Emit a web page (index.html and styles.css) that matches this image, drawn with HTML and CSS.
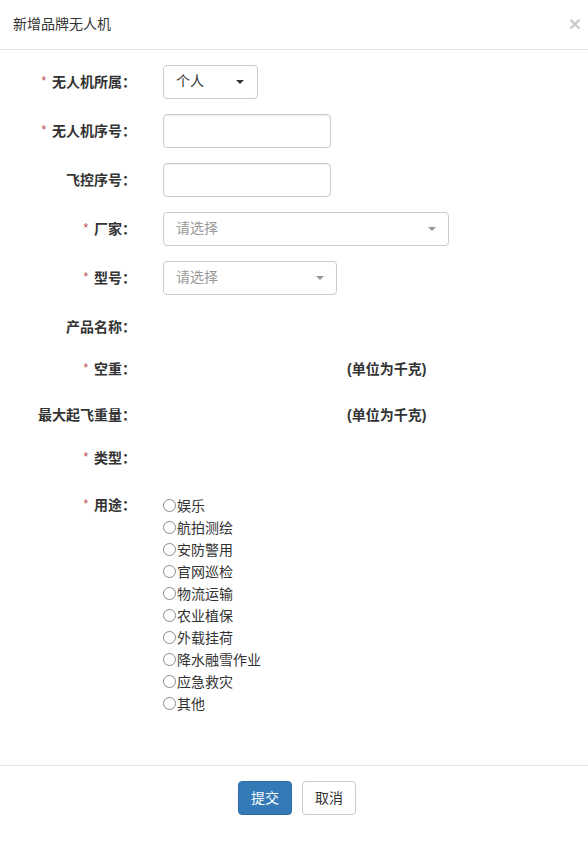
FILE: index.html
```html
<!DOCTYPE html>
<html lang="zh-CN">
<head>
    <meta charset="UTF-8">
    <meta name="viewport" content="width=device-width, initial-scale=1.0">
    <title>新增品牌无人机</title>
    <link rel="stylesheet" href="styles.css">
</head>
<body>
    <div class="modal">
        <div class="modal-header">
            <h4 class="modal-title">新增品牌无人机</h4>
            <button class="close" type="button">&times;</button>
        </div>

        <form class="modal-body">
            <div class="form-group">
                <label class="control-label"><span class="req">*</span> 无人机所属：</label>
                <div class="control">
                    <div class="btn-select">
                        <span>个人</span>
                        <span class="caret"></span>
                    </div>
                </div>
            </div>

            <div class="form-group">
                <label class="control-label"><span class="req">*</span> 无人机序号：</label>
                <div class="control">
                    <input class="form-control w-168" type="text">
                </div>
            </div>

            <div class="form-group">
                <label class="control-label">飞控序号：</label>
                <div class="control">
                    <input class="form-control w-168" type="text">
                </div>
            </div>

            <div class="form-group">
                <label class="control-label"><span class="req">*</span> 厂家：</label>
                <div class="control">
                    <div class="select2 w-286">
                        <span class="placeholder">请选择</span>
                        <span class="arrow"></span>
                    </div>
                </div>
            </div>

            <div class="form-group">
                <label class="control-label"><span class="req">*</span> 型号：</label>
                <div class="control">
                    <div class="select2 w-174">
                        <span class="placeholder">请选择</span>
                        <span class="arrow"></span>
                    </div>
                </div>
            </div>

            <div class="form-group text-row">
                <label class="control-label">产品名称：</label>
                <div class="control"></div>
            </div>

            <div class="form-group text-row tall">
                <label class="control-label"><span class="req">*</span> 空重：</label>
                <div class="control">
                    <span class="unit">(单位为千克)</span>
                </div>
            </div>

            <div class="form-group text-row">
                <label class="control-label">最大起飞重量：</label>
                <div class="control">
                    <span class="unit">(单位为千克)</span>
                </div>
            </div>

            <div class="form-group text-row taller">
                <label class="control-label"><span class="req">*</span> 类型：</label>
                <div class="control"></div>
            </div>

            <div class="form-group">
                <label class="control-label"><span class="req">*</span> 用途：</label>
                <div class="control radio-list">
                    <label class="radio"><input type="radio" name="use">娱乐</label>
                    <label class="radio"><input type="radio" name="use">航拍测绘</label>
                    <label class="radio"><input type="radio" name="use">安防警用</label>
                    <label class="radio"><input type="radio" name="use">官网巡检</label>
                    <label class="radio"><input type="radio" name="use">物流运输</label>
                    <label class="radio"><input type="radio" name="use">农业植保</label>
                    <label class="radio"><input type="radio" name="use">外载挂荷</label>
                    <label class="radio"><input type="radio" name="use">降水融雪作业</label>
                    <label class="radio"><input type="radio" name="use">应急救灾</label>
                    <label class="radio"><input type="radio" name="use">其他</label>
                </div>
            </div>
        </form>

        <div class="modal-footer">
            <button class="btn btn-primary" type="button">提交</button>
            <button class="btn btn-default" type="button">取消</button>
        </div>
    </div>
</body>
</html>
```

FILE: styles.css
```css
* {
    margin: 0;
    padding: 0;
    box-sizing: border-box;
}

body {
    font-family: "Liberation Sans", "Noto Sans CJK SC", sans-serif;
    font-size: 14px;
    line-height: 1.42857;
    color: #333;
    background: #fff;
}

.modal {
    width: 588px;
    min-height: 843px;
    background: #fff;
}

.modal-header {
    display: flex;
    align-items: center;
    justify-content: space-between;
    padding: 14px 15px 15px 13px;
    border-bottom: 1px solid #e5e5e5;
    height: 50px;
}

.modal-title {
    font-size: 14px;
    font-weight: normal;
    line-height: 20px;
}

.close {
    border: none;
    background: none;
    font-family: "Liberation Sans", sans-serif;
    font-size: 21px;
    font-weight: bold;
    line-height: 1;
    color: #000;
    opacity: 0.2;
    margin-right: -8px;
    margin-top: -2px;
    cursor: pointer;
}

.modal-body {
    padding: 15px 15px 35px;
}

.form-group {
    display: grid;
    grid-template-columns: 121px 1fr;
    column-gap: 27px;
    margin-bottom: 15px;
}

.control-label {
    text-align: right;
    font-weight: bold;
    font-size: 14px;
    padding-top: 7px;
    line-height: 20px;
    white-space: nowrap;
}

.req {
    color: #b9464b;
    font-size: 12px;
    font-weight: normal;
    position: relative;
    top: -2px;
    margin-right: 2px;
}

.control {
    min-height: 27px;
}

.text-row.tall .control {
    min-height: 31px;
}

.text-row.taller .control {
    min-height: 32px;
}

.unit {
    display: inline-block;
    margin-left: 184px;
    padding-top: 7px;
    font-weight: bold;
    line-height: 20px;
}

.form-control,
.btn-select,
.select2 {
    height: 34px;
    border: 1px solid #ccc;
    border-radius: 4px;
    background: #fff;
    box-shadow: inset 0 1px 1px rgba(0, 0, 0, 0.075);
}

.form-control {
    display: block;
    padding: 6px 12px;
    font: inherit;
}

.w-168 { width: 168px; }
.w-286 { width: 286px; }
.w-174 { width: 174px; }

.btn-select {
    width: 95px;
    display: flex;
    align-items: center;
    justify-content: space-between;
    padding: 0 12px 0 12px;
    box-shadow: none;
}

.caret {
    width: 0;
    height: 0;
    border-top: 4px solid #333;
    border-left: 4px solid transparent;
    border-right: 4px solid transparent;
    margin-right: 1px;
}

.select2 {
    display: flex;
    align-items: center;
    justify-content: space-between;
    padding: 0 12px;
    box-shadow: none;
}

.placeholder {
    color: #999;
}

.arrow {
    width: 0;
    height: 0;
    border-top: 4px solid #999;
    border-left: 4px solid transparent;
    border-right: 4px solid transparent;
}

.radio-list {
    display: flex;
    flex-direction: column;
    padding-top: 7px;
}

.radio {
    display: flex;
    align-items: center;
    line-height: 22px;
    height: 22px;
    font-size: 14px;
}

.radio input {
    appearance: none;
    width: 13px;
    height: 13px;
    border: 1px solid #8a8a8a;
    border-radius: 50%;
    background: #fff;
    margin: 0 1px 0 0;
}

.modal-footer {
    display: flex;
    justify-content: center;
    gap: 10px;
    padding: 15px 15px 15px 21px;
    border-top: 1px solid #e5e5e5;
}

.btn {
    height: 34px;
    padding: 6px 12px;
    font: inherit;
    font-size: 14px;
    line-height: 20px;
    border: 1px solid transparent;
    border-radius: 4px;
    cursor: pointer;
}

.btn-primary {
    color: #fff;
    background: #337ab7;
    border-color: #2e6da4;
}

.btn-default {
    color: #333;
    background: #fff;
    border-color: #ccc;
}
```
